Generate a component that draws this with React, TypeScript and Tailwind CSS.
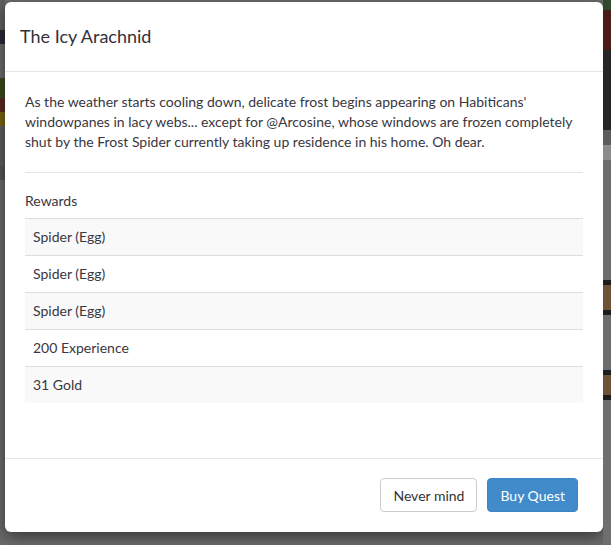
import React from 'react';

const rewards = ['Spider (Egg)', 'Spider (Egg)', 'Spider (Egg)', '200 Experience', '31 Gold'];

export default function App() {
  return (
    <div
      className="w-[611px] h-[545px] bg-[#6d6d6d] flex overflow-hidden"
      style={{ fontFamily: 'Lato, "Open Sans", sans-serif' }}
    >
      {/* left edge of the page behind the overlay */}
      <div className="w-[5px] flex flex-col">
        <div className="h-[30px] bg-[#5f5f5f]" />
        <div className="h-[14px] bg-[#2c2838]" />
        <div className="h-[34px] bg-[#6a6a6a]" />
        <div className="h-[20px] bg-[#3d4a1c]" />
        <div className="h-[14px] bg-[#5a2a20]" />
        <div className="h-[14px] bg-[#7a6410]" />
        <div className="h-[40px] bg-[#5e5e5e]" />
        <div className="h-[14px] bg-[#575757]" />
        <div className="flex-1 bg-[#6b6b6b]" />
      </div>

      <div className="w-[598px] pt-[2px]">
        <div className="h-[530px] bg-white rounded-[6px] shadow-[0_5px_15px_rgba(0,0,0,0.5)] flex flex-col text-[#3a3741]">
          <div className="h-[70px] border-b border-[#e5e5e5] px-[15px] flex items-center">
            <h4 className="text-[18px] text-[#34313a]">The Icy Arachnid</h4>
          </div>

          <div className="flex-1 px-[20px] pt-[20px]">
            <p className="text-[14px] leading-[20px]">
              As the weather starts cooling down, delicate frost begins appearing on Habiticans'
              windowpanes in lacy webs... except for @Arcosine, whose windows are frozen completely
              shut by the Frost Spider currently taking up residence in his home. Oh dear.
            </p>
            <div className="mt-[20px] border-t border-[#e5e5e5]" />
            <div className="pt-[18px] text-[14px] leading-[20px]">Rewards</div>
            <div className="mt-[7px] text-[14px] leading-[20px]">
              {rewards.map((r, i) => (
                <div
                  key={i}
                  className={`border-t border-[#dddddd] px-[8px] py-[8px] ${i % 2 === 0 ? 'bg-[#f9f9f9]' : 'bg-white'}`}
                >
                  {r}
                </div>
              ))}
            </div>
          </div>

          <div className="border-t border-[#e5e5e5] pt-[19px] pb-[20px] pr-[25px] flex justify-end gap-[10px]">
            <button className="h-[34px] px-[12px] rounded-[4px] border border-[#cccccc] bg-white text-[14px] text-[#333333]">
              Never mind
            </button>
            <button className="h-[34px] px-[12px] rounded-[4px] border border-[#3f84c6] bg-[#428bca] text-[14px] text-white">
              Buy Quest
            </button>
          </div>
        </div>
      </div>

      {/* right edge of the page behind the overlay */}
      <div className="flex-1 flex flex-col">
        <div className="h-[10px] bg-[#2f4a2a]" />
        <div className="h-[40px] bg-[#4a1c18]" />
        <div className="h-[80px] bg-[#262626]" />
        <div className="h-[15px] bg-[#5c5c5c]" />
        <div className="h-[15px] bg-[#8a8c90]" />
        <div className="h-[120px] bg-[#6c6c6c]" />
        <div className="h-[5px] bg-[#1c1c1c]" />
        <div className="h-[25px] bg-[#6e5238]" />
        <div className="h-[5px] bg-[#1c1c1c]" />
        <div className="h-[55px] bg-[#6c6c6c]" />
        <div className="h-[5px] bg-[#1c1c1c]" />
        <div className="h-[20px] bg-[#6e5238]" />
        <div className="h-[5px] bg-[#1c1c1c]" />
        <div className="flex-1 bg-[#6e6e6e]" />
      </div>
    </div>
  );
}
